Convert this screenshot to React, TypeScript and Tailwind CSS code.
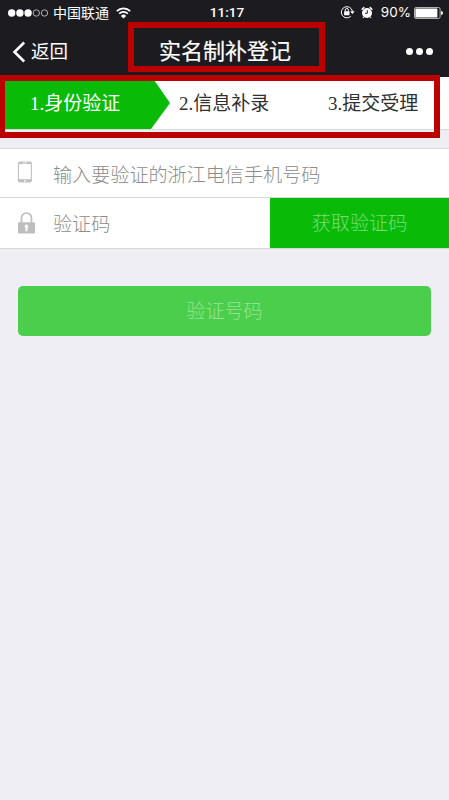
import { useState } from "react";

const STEPS = ["1.身份验证", "2.信息补录", "3.提交受理"];

function SignalDots() {
  return (
    <svg width="42" height="10" viewBox="0 0 42 10" className="shrink-0" aria-hidden="true">
      {[0, 1, 2, 3, 4].map((i) => (
        <circle
          key={i}
          cx={4.7 + i * 8.2}
          cy="5"
          r={i < 3 ? 3.7 : 3.2}
          fill={i < 3 ? "#fff" : "none"}
          stroke={i < 3 ? "none" : "#d4d4d4"}
          strokeWidth="0.8"
        />
      ))}
    </svg>
  );
}

function WifiIcon() {
  return (
    <svg width="15" height="12" viewBox="0 0 15 12" fill="none" stroke="#fff" aria-hidden="true">
      <path d="M0.8 4.1a9.5 9.5 0 0 1 13.4 0" strokeWidth="1.7" />
      <path d="M3.2 6.6a6.1 6.1 0 0 1 8.6 0" strokeWidth="1.6" />
      <path d="M7.5 11.5 4.9 8.9a3.7 3.7 0 0 1 5.2 0z" fill="#fff" stroke="none" />
    </svg>
  );
}

function RotationLockIcon() {
  return (
    <svg width="15" height="14" viewBox="0 0 15 14" fill="none" stroke="#fff" aria-hidden="true">
      <path d="M10.8 11.3A5.6 5.6 0 1 1 12.4 6.2" strokeWidth="1" />
      <path d="M10.1 6.2h4.6l-2.3 2.9z" fill="#fff" stroke="none" />
      <rect x="4.1" y="6.2" width="5.4" height="4" rx="0.4" fill="#fff" stroke="none" />
      <path d="M5.2 6.5V5.1a1.6 1.6 0 0 1 3.2 0v1.4" strokeWidth="1" />
    </svg>
  );
}

function AlarmIcon() {
  return (
    <svg width="12" height="13" viewBox="0 0 12 13" fill="none" aria-hidden="true">
      <circle cx="6" cy="7" r="5" fill="#fff" />
      <path d="M1.1 3.2 2.8 1.6M10.9 3.2 9.2 1.6" stroke="#fff" strokeWidth="1.5" strokeLinecap="round" />
      <path d="M2.7 11 2 12M9.3 11l.7 1" stroke="#fff" strokeWidth="1.2" />
      <path d="M6.3 4.2v3.1H4" stroke="#1c1c20" strokeWidth="1" />
    </svg>
  );
}

function BatteryIcon() {
  return (
    <svg width="29" height="12" viewBox="0 0 29 12" aria-hidden="true">
      <rect x="0.5" y="0.5" width="25.6" height="11" rx="1.6" fill="none" stroke="#d8d8d8" strokeWidth="0.8" />
      <rect x="1.4" y="1.4" width="22" height="9.2" rx="0.6" fill="#fff" />
      <path d="M27.1 3.8c1.3.5 1.9 1.2 1.9 2.2s-.6 1.7-1.9 2.2z" fill="#fff" />
    </svg>
  );
}

function PhoneIcon() {
  return (
    <svg width="15" height="22" viewBox="0 0 15 22" aria-hidden="true">
      <rect x="0.9" y="0.4" width="14" height="21.2" rx="2" fill="#c0c0c0" />
      <rect x="2" y="3" width="11.8" height="15.2" fill="#fff" />
      <path d="M6 1.8h3.8" stroke="#fff" strokeWidth="0.8" />
      <circle cx="7.9" cy="19.9" r="0.9" fill="#fff" />
    </svg>
  );
}

function LockIcon() {
  return (
    <svg width="17" height="22" viewBox="0 0 17 22" aria-hidden="true">
      <path d="M3.5 10.5V6a5 5 0 0 1 10 0v4.5" fill="none" stroke="#bdbdbd" strokeWidth="1.7" />
      <rect x="0" y="10.2" width="17" height="11.4" rx="1" fill="#bdbdbd" />
      <path d="M8.5 12.6a1.9 1.9 0 0 1 1 3.5v3.1h-2v-3.1a1.9 1.9 0 0 1 1-3.5z" fill="#fff" />
    </svg>
  );
}

export default function App() {
  const [phone, setPhone] = useState("");
  const [code, setCode] = useState("");

  return (
    <div className="relative h-[800px] w-[449px] overflow-hidden bg-[#efeef4] font-['Liberation_Sans','Noto_Sans_CJK_SC',sans-serif]">
      <header className="h-[77px] bg-[#1c1c20] text-white">
        <div className="grid h-[25px] grid-cols-[1fr_auto_1fr] items-center pl-[7px] pr-[6px]">
          <div className="flex items-center">
            <SignalDots />
            <span className="ml-[4px] mr-[7px] text-[14px] leading-none">中国联通</span>
            <WifiIcon />
          </div>
          <span className="pl-[4px] font-['Roboto',sans-serif] text-[13.5px] font-medium">11:17</span>
          <div className="flex items-center justify-end">
            <span className="pb-px">
              <RotationLockIcon />
            </span>
            <span className="ml-[6px] pb-px">
              <AlarmIcon />
            </span>
            <span className="ml-[8px] mr-[3px] font-['Inter',sans-serif] text-[13.5px]">90%</span>
            <BatteryIcon />
          </div>
        </div>
        <div className="grid h-[52px] grid-cols-[1fr_auto_1fr] items-center pl-[12px] pr-[16px]">
          <button type="button" className="flex items-center gap-[5px] pt-px text-[18.5px]">
            <svg width="14" height="22" viewBox="0 0 14 22" fill="none" aria-hidden="true">
              <path d="M12.2 1.5 2.5 11l9.7 9.5" stroke="#fff" strokeWidth="2.6" />
            </svg>
            返回
          </button>
          <h1 className="pl-[5px] text-[22px] font-normal [-webkit-text-stroke:0.2px_#fff]">实名制补登记</h1>
          <button type="button" className="flex justify-end gap-[3px]" aria-label="更多">
            <i className="size-[7px] rounded-full bg-white" />
            <i className="size-[7px] rounded-full bg-white" />
            <i className="size-[7px] rounded-full bg-white" />
          </button>
        </div>
      </header>

      <nav className="h-[53px] border-b border-[#d9d9d9] bg-white">
        <ol className="grid h-full grid-cols-[170px_150px_129px] items-center font-['Liberation_Serif','Noto_Sans_CJK_SC',serif] text-[19px] text-[#303030]">
          <li className="flex h-full items-center bg-[#09bb07] pl-[30px] pt-[2px] text-white [clip-path:polygon(0_0,152px_0,100%_50%,151px_100%,0_100%)]">
            {STEPS[0]}
          </li>
          <li className="pl-[9px] pt-[2px]">{STEPS[1]}</li>
          <li className="pl-[8px] pt-[2px]">{STEPS[2]}</li>
        </ol>
      </nav>

      <form onSubmit={(e) => e.preventDefault()}>
        <div className="mt-[18px] border-y border-[#d9d9d9] bg-white text-[19.1px] font-light">
          <label className="flex h-[49px] items-center border-b border-[#d9d9d9] pl-[17px]">
            <span className="w-[36px] pb-[3px]">
              <PhoneIcon />
            </span>
            <input
              value={phone}
              onChange={(e) => setPhone(e.target.value)}
              placeholder="输入要验证的浙江电信手机号码"
              className="min-w-0 flex-1 pt-[6px] outline-none placeholder:text-[#8c8c8c]"
            />
          </label>
          <div className="flex h-[50px]">
            <label className="flex w-[270px] items-center pl-[18px]">
              <span className="w-[35px]">
                <LockIcon />
              </span>
              <input
                value={code}
                onChange={(e) => setCode(e.target.value)}
                placeholder="验证码"
                className="min-w-0 flex-1 pt-[4px] outline-none placeholder:text-[#8c8c8c]"
              />
            </label>
            <button type="button" className="flex-1 bg-[#09bb07] pt-[2px] text-[#7bdc7a]">
              获取验证码
            </button>
          </div>
        </div>
        <button
          type="submit"
          className="mx-[18px] mt-[37px] h-[50px] w-[413px] rounded-[5px] bg-[#4bce4b] pt-[2px] text-[19.1px] font-light text-[#96e495]"
        >
          验证号码
        </button>
      </form>

      {/* red highlight frames over the title and the step bar */}
      <div className="absolute left-[128px] top-[22px] h-[50px] w-[197px] border-[6px] border-[#bb0000]" />
      <div className="absolute -left-px top-[75px] h-[63px] w-[441px] border-[6px] border-[#bb0000]" />
    </div>
  );
}
